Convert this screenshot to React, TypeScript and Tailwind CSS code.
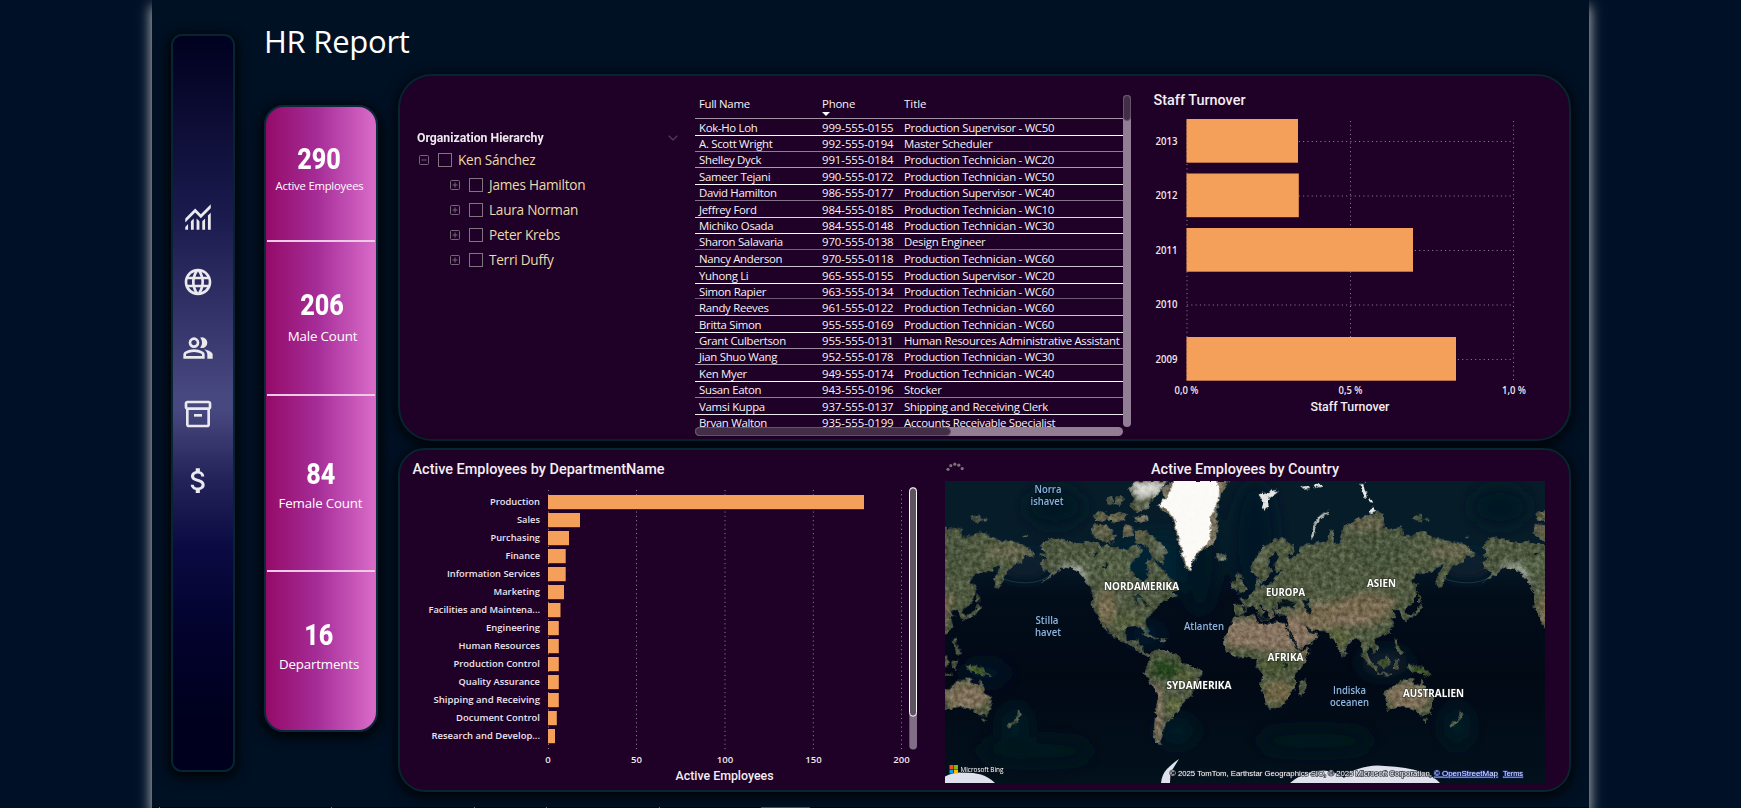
import React from 'react';
import { MdAttachMoney, MdLanguage, MdOutlineInventory2 } from 'react-icons/md';
import { ChevronDown } from 'lucide-react';

const SEGOE = '"Open Sans", "Noto Sans", sans-serif';
const DIN = 'Roboto, "Open Sans", sans-serif';

const kpis = [
  { value: '290', label: 'Active Employees', box: 'h-[135px] pt-[37px] pr-[3px]', text: 'mt-[2px] text-[11.3px] tracking-[-0.22px]', line: true },
  { value: '206', label: 'Male Count', box: 'h-[154px] pt-[48px] pl-[3px]', text: 'mt-[6px] text-[13.3px] tracking-[-0.15px]', line: true },
  { value: '84', label: 'Female Count', box: 'h-[176px] pt-[63px] pr-[1px]', text: 'mt-[4px] text-[13.3px] tracking-[-0.15px]', line: true },
  { value: '16', label: 'Departments', box: 'h-[158px] pt-[48px] pr-[4px]', text: 'mt-[4px] text-[13.3px] tracking-[-0.15px]', line: false },
];

const people = ['James Hamilton', 'Laura Norman', 'Peter Krebs', 'Terri Duffy'];

// name, phone, title, bottom rule position, rule class
const rows: [string, string, string, number, string][] = [
  ['Kok-Ho Loh', '999-555-0155', 'Production Supervisor - WC50', 135, 'border-white'],
  ['A. Scott Wright', '992-555-0194', 'Master Scheduler', 151, 'border-[#8d7f92]'],
  ['Shelley Dyck', '991-555-0184', 'Production Technician - WC20', 167, 'border-[#a79bac]'],
  ['Sameer Tejani', '990-555-0172', 'Production Technician - WC50', 184, 'border-white'],
  ['David Hamilton', '986-555-0177', 'Production Supervisor - WC40', 200, 'border-[#84748a]'],
  ['Jeffrey Ford', '984-555-0185', 'Production Technician - WC10', 217, 'border-[#ddd5e0]'],
  ['Michiko Osada', '984-555-0148', 'Production Technician - WC30', 233, 'border-white'],
  ['Sharon Salavaria', '970-555-0138', 'Design Engineer', 249, 'border-[#74637a]'],
  ['Nancy Anderson', '970-555-0118', 'Production Technician - WC60', 266, 'border-[#cbc2cf]'],
  ['Yuhong Li', '965-555-0155', 'Production Supervisor - WC20', 283, 'border-white'],
  ['Simon Rapier', '963-555-0134', 'Production Technician - WC60', 298, 'border-[#6a5970]'],
  ['Randy Reeves', '961-555-0122', 'Production Technician - WC60', 315, 'border-[#cbc2cf]'],
  ['Britta Simon', '955-555-0169', 'Production Technician - WC60', 332, 'border-white'],
  ['Grant Culbertson', '955-555-0131', 'Human Resources Administrative Assistant', 348, 'border-[#9a8c9f]'],
  ['Jian Shuo Wang', '952-555-0178', 'Production Technician - WC30', 364, 'border-[#a79bac]'],
  ['Ken Myer', '949-555-0174', 'Production Technician - WC40', 381, 'border-white'],
  ['Susan Eaton', '943-555-0196', 'Stocker', 397, 'border-[#8d7f92]'],
  ['Vamsi Kuppa', '937-555-0137', 'Shipping and Receiving Clerk', 414, 'border-[#eee8f0]'],
  ['Bryan Walton', '935-555-0199', 'Accounts Receivable Specialist', 430, 'border-white'],
];

const turnover = [
  { year: '2013', y: 119, end: 1298, grid: 141.5 },
  { year: '2012', y: 173.5, end: 1298.8, grid: 196 },
  { year: '2011', y: 228, end: 1413, grid: 250.5 },
  { year: '2010', y: 282, end: 1187, grid: 305 },
  { year: '2009', y: 337, end: 1456, grid: 359.5 },
];

// label, bar end, label width
const departments: [string, number, number][] = [
  ['Production', 864, 50],
  ['Sales', 580, 23],
  ['Purchasing', 569, 49.5],
  ['Finance', 565.7, 34.5],
  ['Information Services', 565.7, 93],
  ['Marketing', 564, 46.5],
  ['Facilities and Maintena...', 560.5, 111.5],
  ['Engineering', 558.8, 54],
  ['Human Resources', 558.8, 81.5],
  ['Production Control', 558.8, 86.5],
  ['Quality Assurance', 558.8, 81.5],
  ['Shipping and Receiving', 558.8, 106.5],
  ['Document Control', 556.8, 84],
  ['Research and Develop...', 555, 108.5],
];

const americas = [
  'M300 215L315 200 335 185 350 192 375 195 410 205 440 198 480 210 520 217 560 222 590 205 605 225 600 240 575 262 568 285 585 305 600 315 615 318 630 292 615 265 640 250 655 275 675 288 690 310 705 320 715 345 695 352 712 362 690 370 670 378 650 400 637 410 620 432 616 448 626 475 614 476 602 456 585 452 565 454 555 470 560 495 578 500 596 488 592 508 606 514 610 532 632 540 625 547 600 532 570 510 540 497 515 478 490 440 505 472 488 455 470 415 456 395 458 355 440 320 415 290 390 280 370 276 350 293 330 308 300 325 322 307 335 293 310 285 303 265 320 250 298 240 315 232Z',
  'M585 165L620 168 650 195 685 232 668 242 672 268 640 248 622 215 588 200Z',
  'M460 148L500 152 528 182 512 208 482 196 455 178Z',
  'M462 118L488 105 505 125 490 140 466 136ZM500 128L535 110 560 118 552 138 515 142ZM548 152L575 150 580 185 550 188ZM530 60L552 72 540 95 524 88ZM580 128L618 120 622 138 592 142ZM500 72L515 66 520 84 505 90Z',
  'M565 40L590 18 680 18 660 50 640 70 620 100 590 112 568 95 580 70Z',
  'M828 240L850 234 862 248 845 261 832 252Z',
  'M600 476L620 474 655 492 640 493 615 482ZM660 492L682 494 676 499 660 498Z',
  'M632 532L655 521 690 530 720 545 730 565 785 583 780 610 765 635 755 665 735 675 720 705 700 718 695 735 680 740 670 765 660 790 668 812 650 805 640 780 645 730 652 680 650 652 630 625 615 595 620 565 632 550Z',
];

const oldWorld = [
  'M-18 418L-18 387 15 392 0 373 22 370 28 358 45 345 46 325 55 312 60 335 90 325 102 320 110 300 135 285 108 290 103 268 116 240 108 230 90 250 84 275 96 288 82 305 65 328 54 315 50 303 35 292 35 265 55 240 70 215 100 193 130 190 160 213 165 235 140 240 150 254 165 243 175 235 180 215 200 208 220 210 235 202 258 205 268 168 282 165 280 208 300 205 305 178 312 150 335 142 370 125 410 110 432 118 430 148 445 165 485 155 490 185 525 180 545 168 570 183 600 195 640 200 670 205 710 238 700 246 675 240 670 262 640 270 622 295 606 335 592 340 588 310 603 285 610 268 590 275 575 290 530 295 515 325 535 330 528 362 515 385 492 408 504 430 490 434 478 405 455 405 468 425 455 430 462 455 440 478 415 487 402 492 418 522 400 532 386 512 382 540 402 570 385 565 370 538 362 500 350 486 330 500 316 520 306 545 292 510 280 490 268 480 255 468 215 466 192 450 205 470 234 480 215 503 178 522 160 495 142 458 144 420 110 420 100 405 130 395 165 400 160 385 142 375 125 388 115 380 108 400 95 402 105 420 88 430 82 410 65 395 55 385 62 400 76 412 64 424 48 400 38 390 22 398 12 415 -2 424Z',
  'M-18 428L15 423 45 421 52 440 80 450 98 440 134 446 140 466 160 505 180 527 208 522 195 560 165 600 165 640 142 670 126 695 90 703 80 690 60 630 70 600 50 575 50 550 20 545 -20 547 -46 520 -48 490 -30 455Z',
  'M-20 345L-12 318 -10 300 8 302 0 312 12 326 20 346 8 352 -8 354 0 340ZM-26 322L-16 318 -16 338 -28 340Z',
  'M432 650L460 635 480 618 520 610 520 625 540 632 545 612 560 650 580 670 575 700 565 720 540 720 520 700 480 695 440 705 438 680Z',
  'M548 732L562 732 556 746ZM660 705L672 718 660 735 632 760 628 752 655 730Z',
  'M500 570L525 572 545 576 578 602 540 598 512 585ZM412 562L445 543 452 566 430 582ZM362 537L375 540 412 575 416 590 390 572ZM414 592L460 597 458 602 415 598ZM464 490L474 492 472 508 490 535 478 540 465 510ZM460 560L478 555 472 585 462 580Z',
  'M536 350L541 360 541 385 534 378ZM540 390L548 396 530 420 502 430 494 440 498 425 525 412Z',
  'M176 625L200 612 192 655 180 665ZM310 532L318 542 310 546Z',
  'M520 125L545 120 548 140 526 138ZM552 132L570 134 560 140ZM675 182L688 182 682 189Z',
];

const inland = [
  'M120 382L128 372 148 378 165 384 160 396 125 398ZM190 375L208 372 205 390 215 405 212 420 200 418 195 398Z',
  'M138 456L144 458 178 520 172 522ZM193 450L206 464 220 464 214 472 204 470Z',
  'M133 565L141 565 140 575 134 574Z',
  'M5 400L20 396 14 416ZM48 410L62 424 80 430 90 436 60 436Z',
];

const lakes = [
  'M580 362L600 358 606 368 592 368 588 390 584 370ZM606 376L620 380 612 390ZM614 388L628 386 620 392Z',
  'M460 235L475 232 466 245ZM488 275L508 266 500 277ZM505 188L520 200 515 210Z',
];

const snow = [
  'M55 58L68 52 80 60 95 42 115 50 95 66 84 72 86 92 75 108 66 100 70 80Z',
  'M182 38L205 34 212 42 190 44ZM218 30L240 26 246 34 225 42ZM360 28L370 26 374 44 382 58 384 70 372 64ZM384 76L390 68 400 78 394 84ZM388 102L400 96 410 108 392 112Z',
];

function LandCopy() {
  return (
    <g>
      <g>
        {americas.map((d) => <path key={d} d={d} fill="#4c5640" />)}
        <g clipPath="url(#am)">
          <g filter="url(#soft)">
            <ellipse cx="500" cy="400" rx="30" ry="55" fill="#746a50" />
            <ellipse cx="560" cy="440" rx="50" ry="25" fill="#566041" />
            <ellipse cx="500" cy="270" rx="90" ry="35" fill="#525e44" />
            <path d="M345 285L380 265 420 275 445 320 430 320 405 290 380 282Z" fill="#aab0a6" />
            <path d="M640 555L690 560 735 575 700 610 640 605Z" fill="#23421a" />
            <ellipse cx="735" cy="605" rx="30" ry="22" fill="#56613a" />
            <path d="M640 620L665 640 664 800 645 800Z" fill="#8b7665" />
            <ellipse cx="700" cy="690" rx="25" ry="25" fill="#5f6a41" />
            <path d="M560 20L690 20 650 60 600 75Z" fill="#d7d7d2" />
            <path d="M590 115L640 90 620 140Z" fill="#b9b5a8" />
            <path d="M640 190L690 240 665 235Z" fill="#a2a59b" />
            <ellipse cx="550" cy="150" rx="100" ry="45" fill="#6f6650" opacity=".6" />
            <ellipse cx="846" cy="248" rx="12" ry="7" fill="#c9cac4" />
          </g>
        </g>
        {lakes.map((d) => <path key={d} d={d} fill="#071c26" />)}
        <path d="M690 18L680 30 665 42 672 72 650 92 682 115 700 135 712 190 725 240 735 275 752 290 765 250 790 222 822 210 835 165 828 120 842 60 866 18Z" fill="#77705c" />
        <path d="M700 18L690 50 680 65 656 90 690 112 704 136 716 190 730 240 740 272 752 288 764 246 785 220 805 208 812 165 812 125 837 75 838 40 828 18Z" fill="#fbfaf7" />
      </g>
      <g transform="translate(900 0)">
        {oldWorld.map((d) => <path key={d} d={d} fill="#4e583f" />)}
        <g clipPath="url(#ow)">
          <g filter="url(#soft)">
            <path d="M-45 440L150 420 200 445 240 480 180 522 120 530 -45 512Z" fill="#857260" />
            <path d="M150 410L300 375 380 350 470 370 440 430 390 450 300 450 250 470 190 450Z" fill="#746750" />
            <ellipse cx="330" cy="436" rx="60" ry="16" fill="#84725e" />
            <ellipse cx="380" cy="145" rx="60" ry="22" fill="#64624b" />
            <ellipse cx="630" cy="230" rx="70" ry="25" fill="#64644c" />
            <ellipse cx="420" cy="230" rx="90" ry="60" fill="#48543c" />
            <ellipse cx="110" cy="570" rx="45" ry="25" fill="#44512f" />
            <ellipse cx="115" cy="650" rx="45" ry="35" fill="#6e6547" />
            <ellipse cx="200" cy="540" rx="15" ry="25" fill="#78684e" />
            <ellipse cx="505" cy="665" rx="65" ry="42" fill="#7d6e59" />
            <ellipse cx="540" cy="585" rx="30" ry="14" fill="#385b1f" />
            <ellipse cx="430" cy="565" rx="22" ry="16" fill="#3a4f27" />
            <ellipse cx="300" cy="490" rx="28" ry="35" fill="#59603e" />
            <ellipse cx="60" cy="235" rx="18" ry="35" fill="#646c55" />
            <ellipse cx="235" cy="378" rx="9" ry="6" fill="#d5c5a0" />
          </g>
        </g>
        {inland.map((d) => <path key={d} d={d} fill="#06161f" />)}
        {snow.map((d) => <path key={d} d={d} fill="#e4e6e3" />)}
        <path d="M263 112Q225 125 217 185" fill="none" stroke="#b4b7b0" strokeWidth="8" strokeLinecap="round" />
      </g>
    </g>
  );
}

function MapText({ x, y, w, t, sea }: { x: number; y: number; w: number; t: string; sea?: boolean }) {
  return (
    <text
      x={x} y={y} textAnchor="middle" textLength={w} lengthAdjust="spacingAndGlyphs"
      fontFamily={SEGOE} fontSize={sea ? 10.5 : 11} fontWeight={sea ? 600 : 700}
      fill={sea ? '#8db4dd' : '#ffffff'} stroke={sea ? '#06121f' : '#20241c'} strokeWidth="1.4" paintOrder="stroke" strokeOpacity=".6"
    >{t}</text>
  );
}

function WorldMap() {
  return (
    <svg width="600" height="302" viewBox="0 0 600 302" className="block">
      <defs>
        <linearGradient id="sea" x1="0" y1="0" x2="0" y2="1">
          <stop offset="0" stopColor="#061d29" />
          <stop offset=".22" stopColor="#061d29" />
          <stop offset=".38" stopColor="#020d1a" />
          <stop offset=".65" stopColor="#010915" />
          <stop offset="1" stopColor="#02111c" />
        </linearGradient>
        <clipPath id="am">{americas.map((d) => <path key={d} d={d} />)}</clipPath>
        <clipPath id="ow">{oldWorld.map((d) => <path key={d} d={d} />)}</clipPath>
        <filter id="soft" x="-20%" y="-20%" width="140%" height="140%"><feGaussianBlur stdDeviation="9" /></filter>
        <filter id="haze" filterUnits="userSpaceOnUse" x="-40" y="-40" width="680" height="382"><feGaussianBlur stdDeviation="9" /></filter>
        <filter id="terrain" filterUnits="userSpaceOnUse" x="-10" y="-10" width="620" height="322" colorInterpolationFilters="sRGB">
          <feTurbulence type="fractalNoise" baseFrequency=".2" numOctaves="3" seed="7" result="n" />
          <feDisplacementMap in="SourceGraphic" in2="n" scale="5.5" xChannelSelector="R" yChannelSelector="G" result="d" />
          <feTurbulence type="fractalNoise" baseFrequency=".22" numOctaves="5" seed="3" result="m" />
          <feColorMatrix in="m" type="matrix" values=".75 0 0 0 .13  .75 0 0 0 .13  .75 0 0 0 .12  0 0 0 0 1" result="g" />
          <feBlend in="g" in2="d" mode="soft-light" result="b" />
          <feComposite in="b" in2="d" operator="in" result="c" />
          <feGaussianBlur in="c" stdDeviation=".3" />
        </filter>
      </defs>
      <rect width="600" height="302" fill="url(#sea)" />
      <g filter="url(#haze)">
        <path d="M165 60L225 50 250 75 235 110 180 100Z" fill="#062330" />
        <ellipse cx="255" cy="75" rx="18" ry="60" fill="#031322" />
        <ellipse cx="310" cy="60" rx="22" ry="60" fill="#031525" />
        <ellipse cx="110" cy="26" rx="30" ry="20" fill="#041624" />
        <ellipse cx="555" cy="26" rx="30" ry="20" fill="#041624" />
        <ellipse cx="80" cy="85" rx="26" ry="12" fill="#082430" />
        <ellipse cx="522" cy="85" rx="26" ry="12" fill="#082430" />
        <ellipse cx="70" cy="245" rx="14" ry="22" fill="#041a27" />
        <ellipse cx="512" cy="245" rx="14" ry="22" fill="#041a27" />
        <ellipse cx="232" cy="250" rx="20" ry="14" fill="#041b27" />
        <ellipse cx="440" cy="182" rx="25" ry="13" fill="#08242f" />
        <ellipse cx="40" cy="192" rx="25" ry="12" fill="#051925" />
        <ellipse cx="200" cy="154" rx="20" ry="10" fill="#061f30" />
        <ellipse cx="370" cy="260" rx="60" ry="14" fill="#03141f" />
        <ellipse cx="90" cy="270" rx="60" ry="14" fill="#03141f" />
      </g>
      <g filter="url(#terrain)">
        <g transform="translate(-5 -6) scale(.33333)">
          <g transform="translate(-1325 0)"><LandCopy /></g>
          <LandCopy />
          <g transform="translate(1325 0)"><LandCopy /></g>
        </g>
      </g>
      <g fill="#dfe1ec">
        <path d="M0 295.5Q8 291 17 291.5 27 291 36 293.5 44 296 50 302L0 302Z" />
        <path d="M216 302Q217 293 222 288 229 281 234 278 229 286 226 291 225 296 225 302Z" />
        <path d="M345 302Q354 294 366 291 378 288 388 291 396 294 399 297 405 290 413 288 427 283 440 285 462 286 477 291 490 296 495 302Z" />
      </g>
      <g fill="none" stroke="#7c8f93" strokeWidth=".7" opacity=".35">
        <path d="M108 92Q90 108 58 98" />
        <path d="M550 92Q532 108 500 98" />
      </g>
      <circle cx="203" cy="150" r="1.8" fill="#1f6793" opacity=".7" />
      <MapText x={103} y={12} w={27} t="Norra" sea />
      <MapText x={102} y={24} w={33} t="ishavet" sea />
      <MapText x={102} y={143} w={23} t="Stilla" sea />
      <MapText x={103} y={155} w={26} t="havet" sea />
      <MapText x={259} y={148.5} w={40} t="Atlanten" sea />
      <MapText x={404.5} y={212.5} w={33} t="Indiska" sea />
      <MapText x={404.5} y={224.5} w={39} t="oceanen" sea />
      <MapText x={196.5} y={109} w={75} t="NORDAMERIKA" />
      <MapText x={254} y={208} w={65} t="SYDAMERIKA" />
      <MapText x={340.5} y={114.5} w={39} t="EUROPA" />
      <MapText x={436.5} y={105.5} w={29} t="ASIEN" />
      <MapText x={340.5} y={180} w={36} t="AFRIKA" />
      <MapText x={488.5} y={215.5} w={61} t="AUSTRALIEN" />
      <rect x="4.5" y="284" width="4" height="4" fill="#f25022" />
      <rect x="9" y="284" width="4" height="4" fill="#7fba00" />
      <rect x="4.5" y="288.5" width="4" height="4" fill="#00a4ef" />
      <rect x="9" y="288.5" width="4" height="4" fill="#ffb900" />
      <g fill="#fff">
        <text x="15.5" y="291.3" fontFamily={SEGOE} fontSize="7.4" stroke="#10161f" strokeWidth="1" paintOrder="stroke" textLength="43" lengthAdjust="spacingAndGlyphs">Microsoft Bing</text>
        <g stroke="#1a1f2a" strokeWidth="1.6" strokeOpacity=".85" paintOrder="stroke" fontFamily="Liberation Sans, Arial, sans-serif" fontSize="7.8">
          <text x="225" y="294.7" textLength="262" lengthAdjust="spacingAndGlyphs">© 2025 TomTom, Earthstar Geographics SIO, © 2025 Microsoft Corporation,</text>
          <text x="489" y="294.7" textLength="64" lengthAdjust="spacingAndGlyphs" textDecoration="underline" fill="#dfe6ff" stroke="#1b2d7a">© OpenStreetMap</text>
          <text x="558" y="294.7" textLength="20" lengthAdjust="spacingAndGlyphs" textDecoration="underline" fill="#dfe6ff" stroke="#1b2d7a">Terms</text>
        </g>
      </g>
    </svg>
  );
}

function TurnoverChart() {
  return (
    <svg width="438" height="363" viewBox="1131 76 438 363" className="block shrink-0">
      <text x="1153.5" y="105" fontFamily={DIN} fontWeight="500" fontSize="14" fill="#f3eef4" textLength="92" lengthAdjust="spacingAndGlyphs">Staff Turnover</text>
      <g stroke="#8d7c92" strokeWidth="1" strokeDasharray="1.1 3.2">
        {turnover.map((t) => <line key={t.year} x1="1187" x2="1513" y1={t.grid} y2={t.grid} />)}
        {[1187, 1350.5, 1513.5].map((x) => <line key={x} x1={x} x2={x} y1="121" y2="382" />)}
      </g>
      {turnover.map((t) => (
        <g key={t.year}>
          {t.end > 1187 && <rect x="1186.5" y={t.y} width={t.end - 1186.5} height="43.7" fill="#f4a05b" />}
          <text x="1177.5" y={t.grid + 3.4} textAnchor="end" textLength="22" lengthAdjust="spacingAndGlyphs" fontFamily={SEGOE} fontWeight="600" fontSize="9.8" fill="#eee6ef">{t.year}</text>
        </g>
      ))}
      <g fontFamily={SEGOE} fontWeight="600" fontSize="9.8" fill="#eee6ef" textAnchor="middle">
        <text x="1186.5" y="394" textLength="24" lengthAdjust="spacingAndGlyphs">0,0 %</text>
        <text x="1350.5" y="394" textLength="24" lengthAdjust="spacingAndGlyphs">0,5 %</text>
        <text x="1514" y="394" textLength="24" lengthAdjust="spacingAndGlyphs">1,0 %</text>
      </g>
      <text x="1350" y="411" textAnchor="middle" fontFamily={DIN} fontWeight="500" fontSize="12" fill="#f3eef4" textLength="79" lengthAdjust="spacingAndGlyphs">Staff Turnover</text>
    </svg>
  );
}

function DepartmentChart() {
  return (
    <svg width="545" height="340" viewBox="400 450 545 340" className="block shrink-0">
      <text x="412.5" y="474" fontFamily={DIN} fontWeight="500" fontSize="14" fill="#f3eef4" textLength="252" lengthAdjust="spacingAndGlyphs">Active Employees by DepartmentName</text>
      <g stroke="#8d7c92" strokeWidth="1" strokeDasharray="1.1 3.2">
        {[548.5, 636.5, 725, 813.3, 901.5].map((x) => <line key={x} x1={x} x2={x} y1="490" y2="751" />)}
      </g>
      {departments.map(([name, end, w], i) => (
        <g key={name}>
          <rect x="548" y={495 + i * 18} width={end - 548} height="14.2" fill="#f4a05b" />
          <text x="540" y={505.4 + i * 18} textAnchor="end" textLength={w} lengthAdjust="spacingAndGlyphs" fontFamily={SEGOE} fontWeight="600" fontSize="9.6" fill="#ece4ee">{name}</text>
        </g>
      ))}
      <g fontFamily={SEGOE} fontWeight="600" fontSize="9.6" fill="#eee6ef" textAnchor="middle">
        <text x="548" y="763">0</text>
        <text x="636.5" y="763">50</text>
        <text x="725" y="763">100</text>
        <text x="813.5" y="763">150</text>
        <text x="901.5" y="763">200</text>
      </g>
      <text x="724.5" y="780" textAnchor="middle" fontFamily={DIN} fontWeight="500" fontSize="12" fill="#f3eef4" textLength="98" lengthAdjust="spacingAndGlyphs">Active Employees</text>
      <rect x="909.3" y="487" width="7.7" height="262.5" rx="3.8" fill="#816d86" />
      <rect x="909.5" y="487.8" width="7" height="228.4" rx="3.5" fill="#5d535f" stroke="#fff" />
    </svg>
  );
}

function Toggle({ plus }: { plus?: boolean }) {
  return (
    <svg width="10" height="10" viewBox="0 0 10 10" fill="none" stroke="#75667a" className="shrink-0">
      <rect x=".5" y=".5" width="9" height="9" rx="1" />
      <path d={plus ? 'M2.5 5H7.5M5 2.5V7.5' : 'M2.5 5H7.5'} />
    </svg>
  );
}

export default function App() {
  return (
    <div className="flex h-[808px] w-[1741px] overflow-hidden bg-[#001127] font-['Open_Sans','Noto_Sans',sans-serif] text-white">
      <div className="ml-[152px] flex h-[808px] w-[1437px] shrink-0 flex-col bg-[#001124] shadow-[0_7px_12px_1px_rgba(195,195,195,0.95)]">
        <div className="flex h-[807px]">
          <nav className="mt-[34px] ml-[19px] flex h-[738px] w-[64px] shrink-0 flex-col items-center rounded-[11px] border-2 border-[#052530] bg-[linear-gradient(180deg,#00001f_0%,#1b1b4f_25%,#484880_49%,#484880_51%,#24245a_60%,#0a0a42_70%,#02022c_82%,#00001e_93%)] pt-[164px] pr-[11px] text-[#e9e9ee] shadow-[0_3px_12px_4px_rgba(0,0,0,0.75)]">
            <svg width="34" height="34" viewBox="0 -960 960 960" fill="currentColor" className="block">
              <path d="M120-120v-80l80-80v160h-80Zm160 0v-240l80-80v320h-80Zm160 0v-320l80 81v239h-80Zm160 0v-239l80-80v319h-80Zm160 0v-400l80-80v480h-80ZM120-327v-113l280-280 160 160 280-280v113L560-447 400-607 120-327Z" />
            </svg>
            <MdLanguage size={32} className="mt-[32px] shrink-0" />
            <svg width="32" height="32" viewBox="0 -960 960 960" fill="currentColor" className="mt-[34px] block shrink-0">
              <path d="M40-160v-112q0-34 17.5-62.5T104-378q62-31 126-46.5T360-440q66 0 130 15.5T616-378q29 15 46.5 43.5T680-272v112H40Zm720 0v-120q0-44-24.5-84.5T666-434q51 6 96 20.5t84 35.5q36 20 55 44.5t19 53.5v120H760ZM360-480q-66 0-113-47t-47-113q0-66 47-113t113-47q66 0 113 47t47 113q0 66-47 113t-113 47Zm400-160q0 66-47 113t-113 47q-11 0-28-2.5t-28-5.5q27-32 41.5-71t14.5-81q0-42-14.5-81T544-792q14-5 28-6.5t28-1.5q66 0 113 47t47 113ZM120-240h480v-32q0-11-5.5-20T580-306q-54-27-109-40.5T360-360q-56 0-111 13.5T140-306q-9 5-14.5 14t-5.5 20v32Zm240-320q33 0 56.5-23.5T440-640q0-33-23.5-56.5T360-720q-33 0-56.5 23.5T280-640q0 33 23.5 56.5T360-560Z" />
            </svg>
            <MdOutlineInventory2 size={32} className="mt-[34px] shrink-0" />
            <MdAttachMoney size={33} className="mt-[34px] ml-[1px] shrink-0" />
          </nav>

          <div className="ml-[29px] flex flex-col">
            <h1 className="h-[74px] pt-[20px] text-[31px] leading-[42px] tracking-[-0.25px]">HR Report</h1>
            <div className="flex gap-[20px]">
              <section className="mt-[31px] h-[627px] w-[114px] shrink-0 rounded-[20px] border-2 border-[#0a2a3c] bg-[linear-gradient(90deg,#940b68_0%,#a52c97_46%,#d668c6_96%)] shadow-[0_3px_12px_4px_rgba(0,0,0,0.75)]">
                {kpis.map((k) => (
                  <div key={k.label} className={`mx-px flex flex-col items-center ${k.box} ${k.line ? 'border-b-2 border-[#ecc9e6]' : ''}`}>
                    <div className="h-[30px] scale-x-[0.87] font-['Roboto',sans-serif] text-[29px] leading-[30px] font-extrabold">{k.value}</div>
                    <div className={`h-[20px] leading-[20px] font-medium whitespace-nowrap ${k.text}`}>{k.label}</div>
                  </div>
                ))}
              </section>

              <div className="flex flex-col gap-[7px]">
                <section className="flex h-[367px] w-[1173px] rounded-[34px] border-2 border-[#052530] bg-[#1f0026] shadow-[0_3px_12px_3px_rgba(0,0,0,0.75)]">
                  <div className="w-[295px] shrink-0 pt-[54px] pl-[17px]">
                    <div className="flex h-[16px] items-center justify-between pr-[14px]">
                      <span className="origin-left scale-x-[0.98] font-['Roboto',sans-serif] text-[12.5px] leading-[16px] font-bold text-[#efe8f0]">Organization Hierarchy</span>
                      <ChevronDown size={16} strokeWidth={1.6} color="#54405a" />
                    </div>
                    <div className="mt-[6px] flex h-[16px] items-center pl-[2px] text-[13.6px] tracking-[-0.25px] text-[#e9dba9]">
                      <Toggle />
                      <span className="mr-[6px] ml-[9px] h-[14px] w-[14px] border border-[#82747f]" />
                      Ken Sánchez
                    </div>
                    <div className="mt-[4px]">
                      {people.map((p) => (
                        <div key={p} className="flex h-[25px] items-center pl-[33px] text-[13.6px] tracking-[-0.25px] text-[#e9dba9]">
                          <Toggle plus />
                          <span className="mr-[6px] ml-[9px] h-[14px] w-[14px] border border-[#82747f]" />
                          <span className="mt-px">{p}</span>
                        </div>
                      ))}
                    </div>
                  </div>

                  <div className="w-[428px] shrink-0 pt-[19px] text-[11.4px] font-medium text-[#f6f2f7]">
                    <div className="h-[332px] overflow-hidden">
                      <div className="grid h-[24px] grid-cols-[123px_82px_1fr] border-b border-[#a094a5] pl-[4px] leading-[17px]">
                        <span className="tracking-[-0.3px]">Full Name</span>
                        <span className="tracking-[-0.2px]">
                          Phone
                          <svg width="8" height="4" viewBox="0 0 8 4" className="block"><path d="M0 0H8L4 4Z" fill="#fff" /></svg>
                        </span>
                        <span>Title</span>
                      </div>
                      {rows.map(([name, phone, title, y, line], i) => (
                        <div key={phone} className={`grid grid-cols-[123px_82px_1fr] items-end border-b pl-[4px] leading-[15px] whitespace-nowrap ${line}`} style={{ height: y - (i ? rows[i - 1][3] : 118) }}>
                          <span className="tracking-[-0.3px]">{name}</span>
                          <span className="tracking-[-0.08px]">{phone}</span>
                          <span className="tracking-[-0.3px]">{title}</span>
                        </div>
                      ))}
                    </div>
                    <div className="h-[9px] rounded-full bg-[#917e95]">
                      <div className="h-[9px] w-[256px] rounded-full border border-[#66536b] bg-[#432e48]" />
                    </div>
                  </div>
                  <div className="mt-[19px] h-[332px] w-[8px] shrink-0 rounded-full bg-[#917e95]">
                    <div className="h-[26px] rounded-full border border-[#66536b] bg-[#432e48]" />
                  </div>
                  <div className="-ml-[8px] pl-[8px]"><TurnoverChart /></div>
                </section>

                <section className="flex h-[344px] w-[1173px] rounded-[27px] border-2 border-[#052530] bg-[#1f0026] shadow-[0_3px_12px_3px_rgba(0,0,0,0.75)]">
                  <DepartmentChart />
                  <div className="w-[600px] shrink-0">
                    <svg width="600" height="31" viewBox="945 450 600 31" className="block">
                      <g fill="#7a6f7c">
                        <circle cx="948" cy="469.3" r="1.6" />
                        <circle cx="950.8" cy="465.7" r="1.6" />
                        <circle cx="954.8" cy="464.2" r="1.6" />
                        <circle cx="958.8" cy="465.2" r="1.6" />
                        <circle cx="962.2" cy="468.6" r="1.6" />
                      </g>
                      <text x="1245" y="474" textAnchor="middle" fontFamily={DIN} fontWeight="500" fontSize="14" fill="#f3eef4" textLength="188" lengthAdjust="spacingAndGlyphs">Active Employees by Country</text>
                    </svg>
                    <WorldMap />
                  </div>
                </section>
              </div>
            </div>
          </div>
        </div>
        <div className="flex h-px bg-[#00060f]">
          <div className="ml-[7px] h-px w-px bg-[#64707c]" />
          <div className="ml-[171px] h-px w-px bg-[#64707c]" />
          <div className="ml-[142px] h-px w-px bg-[#64707c]" />
          <div className="ml-[71px] h-px w-px bg-[#64707c]" />
          <div className="ml-[112px] h-px w-px bg-[#64707c]" />
          <div className="ml-[101px] h-px w-[49px] bg-[#12655a]" />
        </div>
      </div>
    </div>
  );
}
